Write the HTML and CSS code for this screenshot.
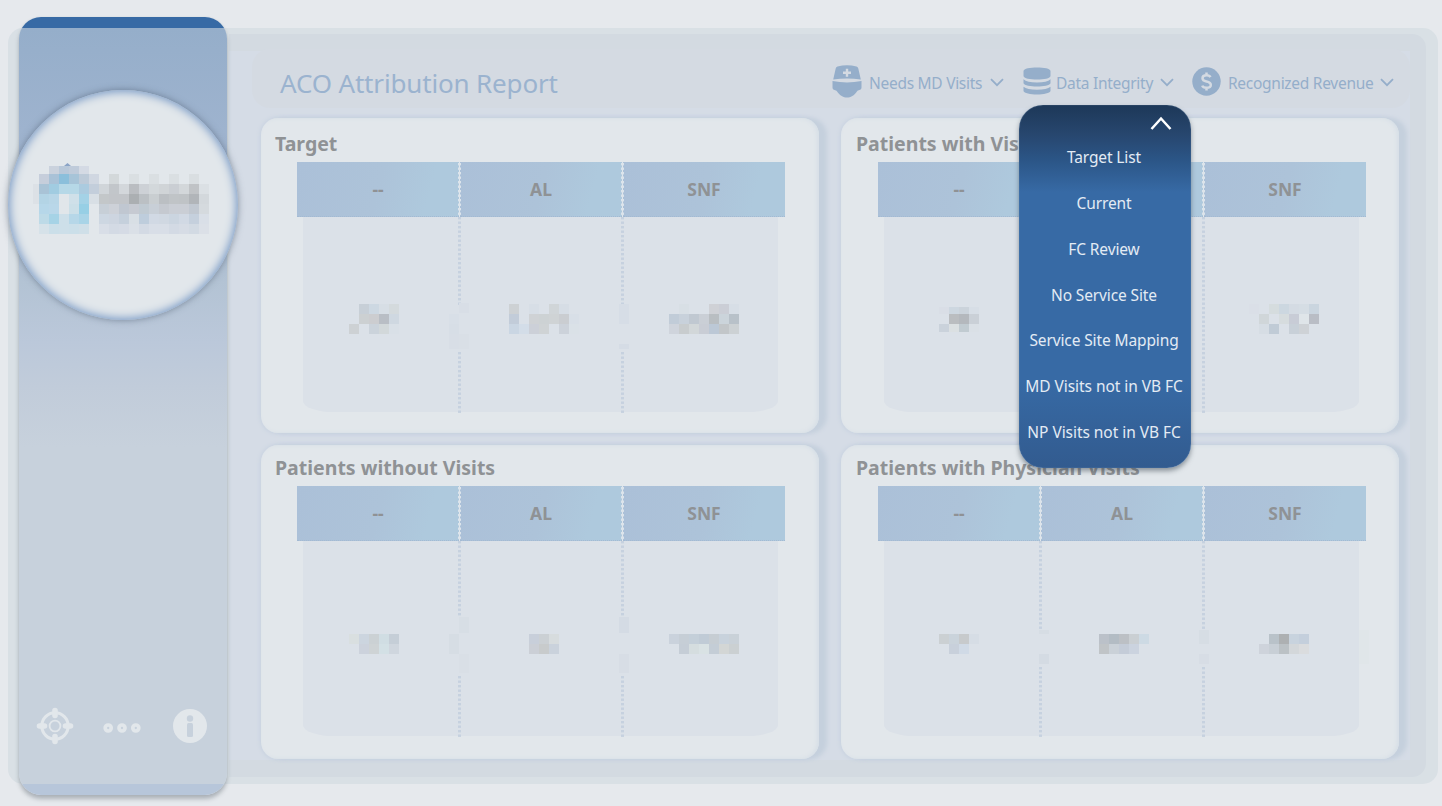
FILE: index.html
```html
<!DOCTYPE html>
<html lang="en">
<head>
<meta charset="utf-8">
<title>ACO Attribution Report</title>
<link rel="stylesheet" href="styles.css">
</head>
<body>
<div class="shell">
  <aside class="sidebar">
    <div class="brand"><svg class="mosaic" id="brand" width="230" height="230" viewBox="8 90 230 230"></svg></div>
    <nav class="tools">
      <svg width="38" height="38" viewBox="0 0 38 38" fill="none" stroke="#e2e7eb"><circle cx="19" cy="19" r="13.200" stroke-width="3"/><circle cx="19" cy="19" r="5.400" stroke-width="1.800"/><path d="M19 3.500v5M19 29.500v5M3.500 19h5M29.500 19h5" stroke-width="5.600" stroke-linecap="round"/></svg>
      <svg class="dots" width="38" height="12" viewBox="0 0 38 12" fill="none" stroke="#e2e7eb" stroke-width="3.700"><circle cx="5.200" cy="6" r="3"/><circle cx="19" cy="6" r="3"/><circle cx="32.800" cy="6" r="3"/></svg>
      <svg width="34" height="34" viewBox="0 0 34 34"><circle cx="17" cy="17" r="17" fill="#e2e7eb"/><circle cx="17" cy="9.500" r="3.200" fill="#c7d1dc"/><rect x="14" y="14" width="6" height="14" rx="1.500" fill="#c7d1dc"/></svg>
    </nav>
  </aside>
  <main class="panel">
    <header class="topbar">
      <h1>ACO Attribution Report</h1>
      <div class="menu m1">
        <svg width="30" height="33" viewBox="0 0 30 33" fill="#95aeca"><path d="M5.500 1.500Q15-.8 24.500 1.500Q26 2 26.300 3.500L28.800 14.500Q15 12.300 1.200 14.500L3.700 3.500Q4 2 5.500 1.500Z"/><path d="M.5 16Q15 18.800 29.500 16V22.500C29.500 24.800 27 25.200 25.500 25.800C22 31 18.500 32.500 15 32.500S8 31 4.500 25.800C3 25.200 .5 24.800 .5 22.500Z"/><path d="M15 3.800v8M11 7.800h8" stroke="#d4dae2" stroke-width="2.400"/></svg>
        <span>Needs MD Visits</span>
        <svg class="chev" width="14" height="9" viewBox="0 0 14 9"><path d="M1 1.200l6 6 6-6"/></svg>
      </div>
      <div class="menu m2">
        <svg width="28" height="28" viewBox="0 0 28 28" fill="#95aeca"><path d="M.5 4C.5-.6 27.500-.6 27.500 4V9C27.500 13.800 .5 13.800 .5 9Z"/><path d="M.5 12.300Q4 15.500 14 15.500T27.500 12.300V16.300C26 20.600 2 20.600 .5 16.300Z"/><path d="M.5 19.700Q4 22.700 14 22.700T27.500 19.700V24C26.500 28.600 1.500 28.600 .5 24Z"/></svg>
        <span>Data Integrity</span>
        <svg class="chev" width="14" height="9" viewBox="0 0 14 9"><path d="M1 1.200l6 6 6-6"/></svg>
      </div>
      <div class="menu m3">
        <svg width="29" height="29" viewBox="0 0 29 29"><circle cx="14.500" cy="14.500" r="14.200" fill="#95aeca"/><path d="M18.500 10.200Q17.500 8.300 14.500 8.300Q10.500 8.300 10.500 11.200Q10.500 13.700 14.500 14.500Q18.800 15.300 18.800 18Q18.800 20.800 14.500 20.800Q11 20.800 10.200 18.600M14.500 5.500v3M14.500 20.500v3" fill="none" stroke="#d4dae2" stroke-width="2.500"/></svg>
        <span>Recognized Revenue</span>
        <svg class="chev" width="14" height="9" viewBox="0 0 14 9"><path d="M1 1.200l6 6 6-6"/></svg>
      </div>
    </header>
    <div class="cards" id="cards"></div>
  </main>
</div>
<div class="dropdown">
  <svg width="22" height="15" viewBox="0 0 22 15"><path d="M1.500 13L11 2.500 20.500 13" fill="none" stroke="#fff" stroke-width="2.500"/></svg>
  <ul>
    <li>Target List</li><li>Current</li><li>FC Review</li><li>No Service Site</li><li>Service Site Mapping</li><li class="wide">MD Visits not in VB FC</li><li class="wide">NP Visits not in VB FC</li>
  </ul>
</div>
<script src="app.js"></script>
</body>
</html>
```
FILE: styles.css
```css
* { box-sizing: border-box; }
body { margin: 0; height: 806px; overflow: hidden; padding: 28px 4px 0 8px; background: #e6e9ed; font-family: "Noto Sans", "Open Sans", sans-serif; }
svg { display: block; flex: none; }
.shell { height: 756px; border-radius: 15px; background: #d9e0e5; display: flex; padding: 6px 12px 7px 11px; }
.sidebar { width: 208px; height: 778px; margin-top: -17px; flex: none; border-radius: 22px; position: relative; z-index: 1;
  background: linear-gradient(#376aa5 0 11px, #95aeca 11px, #a0b4cf 135px, #b3c3d4 265px, #bbc8da 325px, #c1ccda 370px, #c7d1dc 430px, #c7d1dc 767px, #b7c6da 767px);
  box-shadow: 0 4px 4px rgba(90, 100, 110, .4), 0 0 2px #d0d7de; padding-top: 73px; display: flex; flex-direction: column; }
.brand { width: 230px; height: 230px; margin-left: -11px; flex: none; border-radius: 50%; background: #e2e7eb; box-shadow: inset 0 0 9px 2px #7d9dc7, 0 0 7px rgba(75, 90, 110, .6); }
.tools { margin-top: auto; height: 38px; margin-bottom: 50px; padding: 0 20px 0 17px; display: flex; align-items: center; justify-content: space-between; }
.tools .dots { margin: 3px 3px 0 0; }
.panel { flex: 1; min-width: 0; height: 743px; margin-left: 2px; border-radius: 0 14px 14px 0; background: linear-gradient(#d3dae1 0 17px, #d5dce6 17px, #d5dce6 726px, #d3dae1 726px); border-right: 16px solid #d3dae1; padding: 15px 0 0 23px; }
.topbar { height: 59px; background: #d4dae2; border-radius: 18px; display: flex; align-items: center; padding: 9px 16px 0 28px; color: #95aeca; }
h1 { margin: 0; font-weight: 400; font-size: 26px; line-height: 36px; letter-spacing: -.16px; white-space: nowrap; width: 280px; color: #9bb3cf; }
.menu { display: flex; align-items: center; font-size: 15.500px; letter-spacing: -.28px; white-space: nowrap; }
.menu span { margin-right: auto; }
.menu .chev path { fill: none; stroke: #95aeca; stroke-width: 1.800; }
.m1 { width: 172px; margin-left: 272px; gap: 7px; }
.m2 { width: 151px; margin-left: 19px; gap: 5px; }
.m3 { width: 200px; margin-left: 18px; gap: 7px; }
.menu svg:first-child { margin-top: -4px; }
.menu .chev { margin-top: -1px; }
.cards { margin: 10px 0 0 9px; display: grid; grid-template: 315px 314px / 558px 558px; gap: 12px 22px; }
.card { border-radius: 17px; background: #e2e7eb; padding: 12px 0 0 14px; box-shadow: inset -2px 0 4px #d5dee6, 8px 0 4px #c5d0dd, 0 0 5px #c1cddd; }
.card:nth-child(even) { padding-left: 15px; }
.card:nth-child(n+3) { padding-top: 9px; }
.card h2 { margin: 0; font-size: 19.500px; line-height: 28px; height: 32px; color: #8f9295; white-space: nowrap; }
.table { width: 488px; margin-left: 22px; position: relative; }
.head { display: grid; grid-template-columns: 162px 162px 162px; gap: 1px; }
.head div { height: 55px; line-height: 54px; text-align: center; font-size: 17.500px; font-weight: 700; color: #8f9295; background: linear-gradient(105deg, #abc0d8, #adc3d9 50%, #aec9dd 80%, #aec9dd); border-bottom: 1px dotted #a3bad3; }
.body { height: 195px; margin: 0 7px 0 6px; background: #dbe1e8; border-radius: 0 0 30px 30px / 0 0 11px 11px; }
.table .mosaic { position: absolute; left: 0; top: 0; }
.dropdown { position: absolute; left: 1019px; top: 105px; width: 172px; height: 363px; border-radius: 24px; z-index: 2;
  background: linear-gradient(#1d3858, #27466e 8%, #2b5586 15%, #376aa5 24%, #376aa5 76%, #325b8f); box-shadow: 0 3px 5px rgba(70, 80, 90, .55), inset 0 0 1px #8fa9c6; padding-top: 11px; }
.dropdown svg { margin-left: 131px; }
.dropdown ul { margin: 3px 0 0; padding: 0 2px 0 0; list-style: none; }
.dropdown li { height: 45.850px; line-height: 46px; text-align: center; font-size: 15.500px; letter-spacing: -.12px; color: #e3ebf4; white-space: nowrap; }
.dropdown .wide { letter-spacing: -.05px; }
```
FILE: app.js
```js
const NS = 'http://www.w3.org/2000/svg';

function rect(svg, x, y, w, h, fill) {
  const r = document.createElementNS(NS, 'rect');
  for (const [k, v] of Object.entries({ x, y, width: w, height: h, fill })) r.setAttribute(k, v);
  svg.appendChild(r);
}

// A row is [x, y, height, "colours"]; each colour fills a 10px block and "-" leaves a gap.
function drawRows(svg, rows) {
  for (const [x, y, h, cols] of rows) {
    cols.split(' ').forEach((c, i) => { if (c !== '-') rect(svg, x + i * 10, y, 10, h, '#' + c); });
  }
}

const brand = document.getElementById('brand');
rect(brand, 33, 184, 6, 20, '#dce1e6');
drawRows(brand, [
  [49, 166, 8, 'cad2dd b8c8d9 bfcbda d4dae4'],
  [39, 174, 10, 'c6cedb a9c2d7 8bbfdb a7c4d8 bccad8 d0d7e1 - d3d8da - dadfe2 - dadfe2 - dadfe2 - d9dee1'],
  [39, 184, 10, 'a9c3d6 a1cce1 b6d8e7 b6d8e7 abcbdf c3cedb d0d5d9 c2c6ca d3d7db babdc1 cdd1d6 d3d8db d0d4d7 caced3 d3d7da c0c3c6 dbe0e4'],
  [39, 194, 10, 'b3d4e5 b8d6e7 e1e6ea cfe0e9 a4d2e6 d8dfe5 c3c7c9 c2c5c9 c2c5c9 abafb2 bbc0c4 c9ced1 bbbfc3 c0c4c7 bfc3c6 b1b5b9 d3d8dc'],
  [39, 204, 10, 'b6d7e9 b9d7e9 e1e6ea cbdfe8 97cfe5 - c7cfd7 cdd1d8 c0c7d1 c6cad2 c0cad2 c8cfd7 c5c9d0 caced5 caced5 c1c8d1 d5dade'],
  [39, 214, 10, 'bddae7 a6d3e6 cddfe9 b6d7e8 a9d4e7 - cdd7e2 cdd5e0 c5d0dc d8dfe5 becddc d1d9e4 d0d8e2 cbd5e0 d1d9e4 c5d0dd d9dfe7'],
  [39, 224, 10, 'd6e2e9 cbdfe9 cddfe9 cbdfe9 cfdfe8 - d8dee7 d3dae4 d5dbe5 dae0e7 d3dae4 d8dee7 d8dee7 d3dae4 d6dce5 d2dae3 dbe0e7']
]);
const tip = document.createElementNS(NS, 'path');
tip.setAttribute('d', 'M64 166L67.500 163L71 166Z');
tip.setAttribute('fill', '#8ba4c6');
brand.appendChild(tip);

const cards = [
  { title: 'Target', heads: ['--', 'AL', 'SNF'], gap: [[141, 187], [141, 187]], rows: [
    [62, 142, 10, 'c7cfd7 cdd8e2 d7dee5 d4dadd'], [62, 152, 10, 'ccd0d2 cccdd0 b9bec5 cfd8e1'], [52, 162, 10, 'cdd1d4 - cbd3db d2d8da d9e0e7'],
    [162, 141, 10, 'd8dee6'], [152, 152, 10, 'd8dfe7'], [152, 162, 10, 'd7dee6'], [152, 172, 15, 'd8dee6 d9dfe6'],
    [212, 142, 10, 'cdd1d4 - d7dee6 - d0d5d8 d6dde5'], [212, 152, 10, 'c2ccd9 - cfd2d5 cdd2d4 cfd3d5 cacdd1 d8dfe7'], [212, 162, 10, 'cad6e3 d3dde8 ccd0d8 cfd3d5 - ccd2da dae1e7'],
    [322, 142, 20, 'd6dde6'], [322, 182, 5, 'd5dce5'],
    [382, 142, 10, 'd8dfe5 - - cfd1d6 cbced6 d7dee6'], [372, 152, 10, 'c1ccd8 c8d1db c0c8d1 cacfd6 b9bec2 cbd4db b8c1c9'], [372, 162, 10, 'cfd4dc c8ccce d2d7d9 c9cdd5 bcc8d6 c2c6c9 ccd1d4'] ] },
  { title: 'Patients with Visits', heads: ['--', '', 'SNF'], gap: [[141, 187], [0, 0]], rows: [
    [61, 145, 7, 'd9dee6 cdd7e0 cbd3db d7dee6'], [71, 152, 10, 'babdc0 b4b8bd cad0d7'], [61, 162, 8, 'cad2db dbe0e2 c1cbd1 dae0e6'],
    [371, 142, 10, 'dadfe7 - d5dcde ccd7e0 d4dbe3 d5dde4 cad5df'], [381, 152, 10, 'd0d6d9 - d6dcde c8ccd6 dfe5e9 b9bdc5'], [381, 162, 10, 'd6dde4 c0cbd6 - c8d0d8 ced2d6'] ] },
  { title: 'Patients without Visits', heads: ['--', 'AL', 'SNF'], gap: [[131, 188], [131, 188]], rows: [
    [52, 148, 10, 'd9dfe0 ccd5df cbd1d4 d0dde3 c5ced7'], [62, 158, 10, 'ccd2dc ced3d5 d3e0e5 cfd6de'],
    [152, 148, 20, 'd6dde4'], [162, 131, 16, 'd7dee5'], [162, 168, 19, 'd9dfe6'],
    [232, 148, 10, 'c8cfda cbd0d4 d7dcde'], [232, 158, 10, 'cbcfd6 c8cbcc cad2dc'],
    [322, 131, 16, 'd4dbe4'], [322, 168, 19, 'd7dde5'],
    [372, 148, 10, 'cad2dc c6ced6 c4cfd9 c0cbd6 c6cdd3 c8d2dc c9d1d8'], [382, 158, 10, 'c5cdd6 d5dddf d9e2e4 c4cdd6 d3d6d5 cbd0d2'] ] },
  { title: 'Patients with Physician Visits', heads: ['--', 'AL', 'SNF'], gap: [[144, 179], [144, 179]], rows: [
    [61, 148, 10, 'cbd0d3 cad3db c7cacc d6dde5'], [71, 158, 10, 'c8d0db d0dae6'],
    [161, 144, 4, 'd6dde4'], [161, 168, 10, 'd4dbe3'],
    [221, 148, 10, 'bbc1c9 b3bcc4 bcc0c5 cacfd3 cddae4'], [221, 158, 10, 'c0c4c7 cad1d8 c4ccd8 cbd3df'],
    [321, 144, 14, 'd6dde4'], [321, 168, 10, 'd7dde5'], [481, 144, 34, 'e0e6e9'],
    [391, 148, 10, 'b9c2c9 adb0b2 c8d3de c4cfdc'], [381, 158, 10, 'ced3db c8cfd6 bbc1c5 d3d7da dadcde'] ] }
];

for (const c of cards) {
  const card = document.createElement('section');
  card.className = 'card';
  card.innerHTML = `<h2>${c.title}</h2><div class="table"><div class="head">${c.heads.map(h => `<div>${h}</div>`).join('')}</div><div class="body"></div><svg class="mosaic" width="495" height="254" viewBox="0 0 495 254"></svg></div>`;
  const svg = card.querySelector('svg');
  [161, 324].forEach((x, i) => {
    const [from, to] = c.gap[i];
    for (let y = 1; y < 253; y += 4.5) {
      if (y > from && y < to) continue;
      rect(svg, x, y, 3, 2.4, y < 54 ? '#dce4eb' : '#c6d1df');
    }
  });
  drawRows(svg, c.rows);
  document.getElementById('cards').appendChild(card);
}
```
